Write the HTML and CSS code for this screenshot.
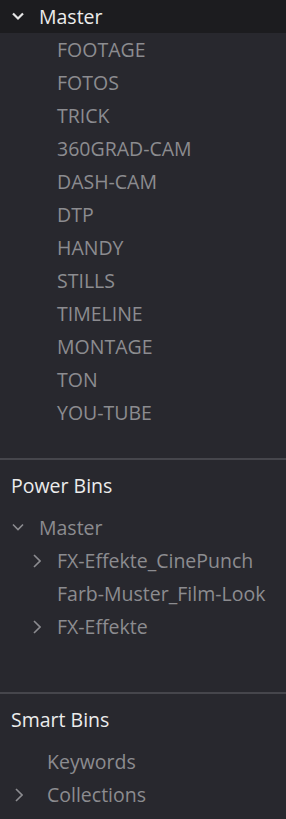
FILE: index.html
```html
<!DOCTYPE html>
<html lang="de">
<head>
  <meta charset="UTF-8" />
  <title>Bins</title>
  <link rel="stylesheet" href="styles.css">
</head>
<body>
  <div id="panel">
    <div class="row root">
      <span class="arrow"><svg width="12" height="9" viewBox="0 0 12 9"><path d="M1 1.5 L6 6.5 L11 1.5" /></svg></span>
      <span class="label">Master</span>
    </div>
    <ul class="bins">
      <li>FOOTAGE</li>
      <li>FOTOS</li>
      <li>TRICK</li>
      <li>360GRAD-CAM</li>
      <li>DASH-CAM</li>
      <li>DTP</li>
      <li>HANDY</li>
      <li>STILLS</li>
      <li>TIMELINE</li>
      <li>MONTAGE</li>
      <li>TON</li>
      <li>YOU-TUBE</li>
    </ul>

    <div class="section power">
      <h4>Power Bins</h4>
      <div class="row sub">
        <span class="arrow"><svg width="12" height="9" viewBox="0 0 12 9"><path d="M1 1.5 L6 6.5 L11 1.5" /></svg></span>
        <span class="label">Master</span>
      </div>
      <div class="row child">
        <span class="arrow"><svg width="8" height="14" viewBox="0 0 8 14"><path d="M1 1 L7 7 L1 13" /></svg></span>
        <span class="label">FX-Effekte_CinePunch</span>
      </div>
      <div class="row child">
        <span class="arrow"></span>
        <span class="label">Farb-Muster_Film-Look</span>
      </div>
      <div class="row child">
        <span class="arrow"><svg width="8" height="14" viewBox="0 0 8 14"><path d="M1 1 L7 7 L1 13" /></svg></span>
        <span class="label">FX-Effekte</span>
      </div>
    </div>

    <div class="section smart">
      <h4>Smart Bins</h4>
      <div class="row smart-item">
        <span class="arrow"></span>
        <span class="label">Keywords</span>
      </div>
      <div class="row smart-item">
        <span class="arrow"><svg width="8" height="14" viewBox="0 0 8 14"><path d="M1 1 L7 7 L1 13" /></svg></span>
        <span class="label">Collections</span>
      </div>
    </div>
  </div>
</body>
</html>
```

FILE: styles.css
```css
* {
  box-sizing: border-box;
}

body {
  margin: 0;
  background: #28282e;
  font-family: "Open Sans", "Noto Sans", sans-serif;
  font-size: 19.5px;
  color: #8c8c90;
}

#panel {
  width: 286px;
  min-height: 819px;
  background: #28282e;
}

.row {
  display: flex;
  align-items: center;
  height: 33px;
}

.arrow {
  display: flex;
  align-items: center;
  justify-content: center;
}

.arrow path {
  fill: none;
  stroke: #8c8c90;
  stroke-width: 1.6;
}

.root {
  background: #1c1c1f;
  height: 33px;
  padding-left: 12px;
}

.root .arrow {
  width: 12px;
  margin-right: 15px;
}

.root .arrow path {
  stroke: #e6e6e6;
  stroke-width: 2.2;
}

.root .label {
  color: #ececec;
}

.bins {
  list-style: none;
  margin: 0;
  padding: 0 0 29px 57px;
}

.bins li {
  height: 33px;
  line-height: 33px;
}

.section {
  border-top: 2px solid #46464c;
}

.section h4 {
  margin: 0;
  height: 51px;
  line-height: 52px;
  padding-left: 11px;
  font-weight: normal;
  font-size: 19.5px;
  color: #ececec;
}

.power {
  padding-bottom: 49px;
}

.sub {
  padding-left: 12px;
}

.sub .arrow {
  width: 12px;
  margin-right: 15px;
}

.child {
  padding-left: 33px;
}

.child .arrow {
  width: 8px;
  margin-right: 16px;
}

.smart-item {
  padding-left: 15px;
}

.smart-item .arrow {
  width: 8px;
  margin-right: 24px;
}
```
